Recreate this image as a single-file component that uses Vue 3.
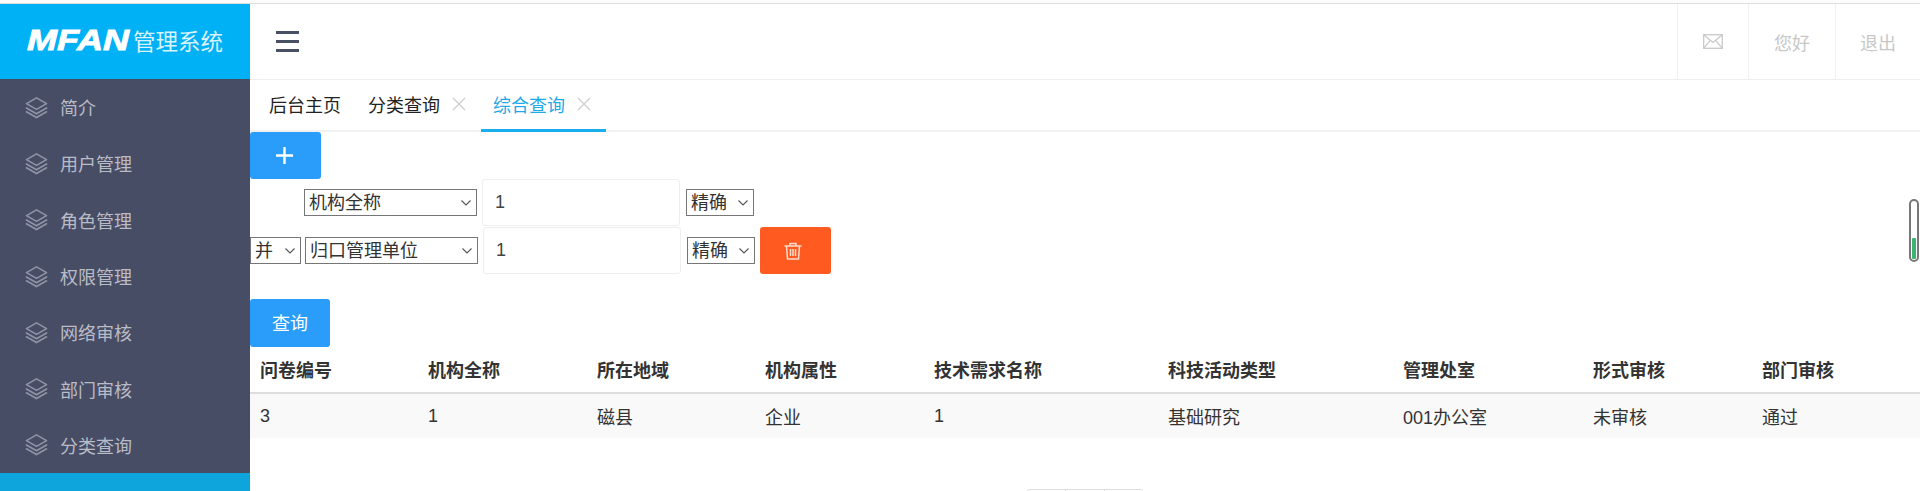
<script setup>
const menus = ['简介', '用户管理', '角色管理', '权限管理', '网络审核', '部门审核', '分类查询']
const fields = ['机构全称', '归口管理单位', '所在地域', '机构属性']
const columns = [
  { title: '问卷编号', width: 168, value: '3' },
  { title: '机构全称', width: 169, value: '1' },
  { title: '所在地域', width: 168, value: '磁县' },
  { title: '机构属性', width: 169, value: '企业' },
  { title: '技术需求名称', width: 234, value: '1' },
  { title: '科技活动类型', width: 235, value: '基础研究' },
  { title: '管理处室', width: 190, value: '001办公室' },
  { title: '形式审核', width: 169, value: '未审核' },
  { title: '部门审核', width: 168, value: '通过' },
]
</script>

<template>
  <div class="page">
    <div class="topline"></div>
    <div class="layout">
      <aside class="sidebar">
        <div class="logo">
          <span class="logo-mark">MFAN</span>
          <span class="logo-text">管理系统</span>
        </div>
        <ul class="menu">
          <li v-for="m in menus" :key="m" class="menu-item">
            <svg class="layers" viewBox="0 0 24 24" fill="none" stroke="currentColor" stroke-width="1.7" stroke-linejoin="round" stroke-linecap="round">
              <path d="M12 2 22.5 8 12 14 1.500 8Z" />
              <path d="M1.500 12.500 12 18.500 22.500 12.500" />
              <path d="M1.500 16.500 12 22.500 22.500 16.500" />
            </svg>
            <span>{{ m }}</span>
          </li>
          <li class="menu-item active"></li>
        </ul>
      </aside>

      <main class="main">
        <header class="header">
          <div class="hamburger"><i></i><i></i><i></i></div>
          <div class="header-right">
            <div class="header-cell mail">
              <svg width="20" height="15" viewBox="0 0 20 15" fill="none" stroke="#c9c9c9" stroke-width="1.300">
                <rect x="0.700" y="0.700" width="18.600" height="13.600" />
                <path d="M0.700 0.700 10 8.500 19.300 0.700M0.700 14.300 7.300 6.300M19.300 14.300 12.700 6.300" />
              </svg>
            </div>
            <div class="header-cell hello">您好</div>
            <div class="header-cell logout">退出</div>
          </div>
        </header>

        <nav class="tabs">
          <div class="tab home">后台主页</div>
          <div class="tab closable">分类查询
            <svg class="close" viewBox="0 0 14 14" stroke="#cfcfcf" stroke-width="1.400"><path d="M1 1 13 13M13 1 1 13" /></svg>
          </div>
          <div class="tab closable active">综合查询
            <svg class="close" viewBox="0 0 14 14" stroke="#cfcfcf" stroke-width="1.400"><path d="M1 1 13 13M13 1 1 13" /></svg>
          </div>
        </nav>

        <section class="content">
          <button class="btn add"><svg width="17" height="17" viewBox="0 0 17 17" stroke="#fff" stroke-width="2.400"><path d="M8.500 0V17M0 8.500H17" /></svg></button>

          <div class="row first">
            <select class="sel-field"><option v-for="f in fields" :key="f">{{ f }}</option></select>
            <input class="val" value="1" />
            <select class="sel-mode"><option>精确</option><option>模糊</option></select>
          </div>
          <div class="row second">
            <select class="sel-join"><option>并</option><option>或</option></select>
            <select class="sel-field"><option v-for="f in ['归口管理单位', '机构全称']" :key="f">{{ f }}</option></select>
            <input class="val" value="1" />
            <select class="sel-mode"><option>精确</option><option>模糊</option></select>
            <button class="btn del">
              <svg width="18" height="18" viewBox="0 0 18 18" fill="none" stroke="#ffdccc" stroke-width="1.500">
                <path d="M0.500 4H17.500M6 4V1.500H12V4M2.500 4 3.500 17H14.500L15.500 4M6.500 7V14M9 7V14M11.500 7V14" />
              </svg>
            </button>
          </div>

          <button class="btn query">查询</button>

          <table class="grid">
            <colgroup>
              <col v-for="c in columns" :key="c.title" :style="{ width: c.width + 'px' }" />
            </colgroup>
            <thead>
              <tr><th v-for="c in columns" :key="c.title">{{ c.title }}</th></tr>
            </thead>
            <tbody>
              <tr><td v-for="c in columns" :key="c.title">{{ c.value }}</td></tr>
            </tbody>
          </table>

          <div class="pager">
            <span></span><span></span><span></span>
          </div>
        </section>
      </main>
    </div>

    <div class="progress"><i></i></div>
  </div>
</template>

<style>
html, body {
  margin: 0;
  overflow: hidden;
}
</style>

<style scoped>
.page {
  position: relative;
  height: 491px;
  overflow: hidden;
  background: #fff;
  font-family: "Liberation Sans", "Noto Sans CJK SC", sans-serif;
  font-size: 18px;
  color: #333;
}

.topline {
  height: 4px;
  box-sizing: border-box;
  background: #fcfcfc;
  border-bottom: 1px solid #ddd;
}

.layout {
  display: flex;
  height: 487px;
}

.sidebar {
  width: 250px;
  flex: none;
  background: #474d65;
  overflow: hidden;
}

.logo {
  height: 75px;
  background: #00b1f5;
  display: flex;
  align-items: center;
  padding: 0 0 3px 27px;
  box-sizing: border-box;
}

.logo-mark {
  display: inline-block;
  font-size: 30px;
  font-weight: 700;
  font-style: italic;
  color: #fff;
  transform: scaleX(1.2);
  transform-origin: left center;
  -webkit-text-stroke: 0.9px #fff;
  margin-right: 21px;
}

.logo-text {
  font-size: 22.500px;
  color: #d9f3ff;
}

.menu {
  list-style: none;
  margin: 0;
  padding: 0;
}

.menu-item {
  height: 56.3px;
  display: flex;
  align-items: center;
  padding-left: 25px;
  color: #b9bcc7;
}

.menu-item.active {
  background: #0ea5dc;
}

.layers {
  width: 23px;
  height: 23px;
  margin-right: 12px;
  color: #8f94a5;
}

.main {
  flex: 1;
  min-width: 0;
}

.header {
  height: 76px;
  box-sizing: border-box;
  border-bottom: 1px solid #eee;
  display: flex;
  align-items: center;
  justify-content: space-between;
}

.hamburger {
  margin-left: 26px;
  width: 23px;
  display: flex;
  flex-direction: column;
  gap: 6px;
}

.hamburger i {
  height: 3px;
  background: #4a5064;
}

.header-right {
  display: flex;
  height: 100%;
}

.header-cell {
  display: flex;
  align-items: center;
  justify-content: center;
  border-left: 1px solid #f0f0f0;
  color: #c8c8c8;
  box-sizing: border-box;
}

.mail { width: 71px; }
.hello { width: 87px; }
.logout { width: 85px; }

.tabs {
  height: 52px;
  display: flex;
  padding-left: 7px;
  box-shadow: inset 0 -2px #f1f1f1;
}

.tab {
  display: flex;
  align-items: center;
  padding: 0 12px 4px;
  box-sizing: border-box;
  height: 52px;
  color: #222;
}

.tab.home {
  margin-right: 3px;
}

.tab.closable {
  padding-right: 15px;
}

.tab.active {
  color: #1fa9e6;
  border-bottom: 3px solid #18aef0;
  padding-bottom: 1px;
}

.close {
  width: 14px;
  height: 14px;
  margin-left: 12px;
}

.btn {
  border: 0;
  border-radius: 3px;
  color: #fff;
  font: inherit;
  padding: 0;
  display: block;
}

.add {
  width: 71px;
  height: 47px;
  background: #2a9dfa;
  display: flex;
  align-items: center;
  justify-content: center;
  padding-right: 3px;
}

.row {
  display: flex;
  align-items: center;
  height: 47px;
}

.row.first {
  padding-left: 54px;
}

.row.second {
  margin-top: 1px;
}

select {
  appearance: none;
  font: inherit;
  color: #333;
  height: 27px;
  padding: 0 0 0 4px;
  border: 1px solid #767676;
  border-radius: 0;
  box-sizing: border-box;
  background: #fff url("data:image/svg+xml,%3Csvg xmlns='http://www.w3.org/2000/svg' width='10' height='6'%3E%3Cpath d='M.5.5 5 5 9.500.5' fill='none' stroke='%23555' stroke-width='1.100'/%3E%3C/svg%3E") no-repeat right 5px center;
}

.sel-field { width: 173px; }
.sel-mode { width: 68px; margin-left: 6px; }
.sel-join { width: 51px; margin-right: 4px; }

.val {
  width: 198px;
  height: 47px;
  box-sizing: border-box;
  margin-left: 5px;
  padding: 0 12px;
  border: 1px solid #eee;
  border-radius: 3px;
  font: inherit;
  color: #444;
  outline: none;
}

.del {
  width: 71px;
  height: 47px;
  margin-left: 5px;
  background: #ff5a1f;
  display: flex;
  align-items: center;
  justify-content: center;
  padding-right: 5px;
}

.query {
  width: 80px;
  height: 48px;
  margin-top: 25px;
  padding-bottom: 3px;
  background: #2a9dfa;
}

.grid {
  width: 1670px;
  table-layout: fixed;
  border-collapse: collapse;
}

.grid th {
  height: 43px;
  padding: 0 10px 2px;
  text-align: left;
  font-weight: 700;
  border-bottom: 2px solid #ddd;
  white-space: nowrap;
}

.grid td {
  height: 44px;
  padding: 0 10px;
  background: #f9f9f9;
  white-space: nowrap;
}

.pager {
  display: flex;
  justify-content: center;
  margin-top: 51px;
}

.pager span {
  width: 40px;
  height: 34px;
  box-sizing: border-box;
  border: 1px solid #ddd;
  margin-left: -1px;
}

.pager span:first-child {
  border-top-left-radius: 4px;
}

.pager span:last-child {
  border-top-right-radius: 4px;
}

.progress {
  position: absolute;
  left: 1909px;
  top: 199px;
  width: 10px;
  height: 63px;
  box-sizing: border-box;
  border: 2px solid #777;
  border-radius: 5px;
  background: #fff;
  display: flex;
  align-items: flex-end;
  justify-content: center;
  padding-bottom: 1px;
}

.progress i {
  width: 4px;
  height: 21px;
  background: #3cb371;
  border-radius: 1px;
}
</style>
